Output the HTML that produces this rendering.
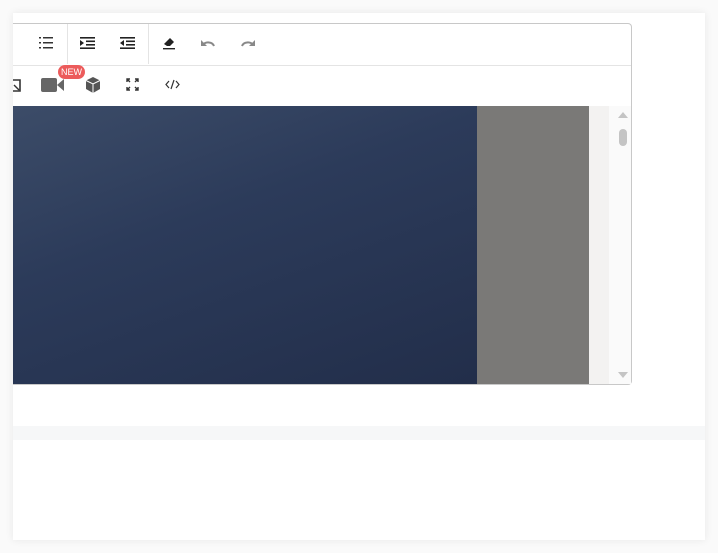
<!DOCTYPE html>
<html><head><style>
body{margin:0;width:718px;height:553px;background:#fafafa;position:relative;overflow:hidden;font-family:"Liberation Sans",sans-serif}
.card{position:absolute;left:13px;top:13px;width:692px;height:527px;background:#fff;box-shadow:0 0 8px rgba(0,0,0,.08)}
.ed{position:absolute;left:13px;top:23px;width:619px;height:362px;border:1px solid #c8c8c8;border-left:none;border-radius:0 4px 4px 0;background:#fff;box-sizing:border-box}
.row{position:absolute;left:0;width:618px;height:41px;border-bottom:1px solid #e4e4e4}
.sep{position:absolute;top:0;width:1px;height:40px;background:#e4e4e4}
svg{position:absolute}
.img{position:absolute;left:0;top:82px;width:464px;height:278px;background:linear-gradient(160deg,#3c4c68 0%,#2c3b5a 40%,#222e4a 100%)}
.gray{position:absolute;left:464px;top:82px;width:112px;height:278px;background:#7a7977}
.lt{position:absolute;left:576px;top:82px;width:20px;height:278px;background:#f3f2f1}
.sb{position:absolute;left:596px;top:82px;width:22px;height:278px;background:#fafafa}
.new{position:absolute;left:58px;top:65px;width:27px;height:14px;border-radius:7px;background:#ec5b5b;color:#fff;font-size:9px;line-height:14px;text-align:center}
</style></head><body>
<div class="card"></div>
<div style="position:absolute;left:13px;top:426px;width:692px;height:14px;background:#f6f7f8"></div>
<div class="ed">
<div class="row" style="top:0"><div class="sep" style="left:54px"></div><div class="sep" style="left:135px"></div></div>
<div class="row" style="top:41px"></div>
<div class="img"></div><div class="gray"></div><div class="lt"></div><div class="sb"></div>
</div>
<svg style="left:38px;top:36px" width="16" height="14"><g fill="#333"><rect x="5" y="1" width="10" height="1.5"/><rect x="5" y="6" width="10" height="1.5"/><rect x="5" y="11" width="10" height="1.5"/><rect x="1" y="1" width="2" height="1.5"/><rect x="1" y="6" width="2" height="1.5"/><rect x="1" y="11" width="2" height="1.5"/></g></svg>
<svg style="left:80px;top:37px" width="15" height="12"><g fill="#222"><rect x="0" y="0" width="15" height="1.6"/><rect x="6" y="3.5" width="9" height="1.6"/><rect x="6" y="7" width="9" height="1.6"/><rect x="0" y="10.4" width="15" height="1.6"/><path d="M0 3l4 3-4 3z"/></g></svg>
<svg style="left:120px;top:37px" width="15" height="12"><g fill="#222"><rect x="0" y="0" width="15" height="1.6"/><rect x="6" y="3.5" width="9" height="1.6"/><rect x="6" y="7" width="9" height="1.6"/><rect x="0" y="10.4" width="15" height="1.6"/><path d="M4 3L0 6l4 3z"/></g></svg>
<svg style="left:162px;top:36px" width="14" height="14"><path d="M2 8l6-6 4 4-4 4H5z" fill="#222"/><rect x="1" y="12" width="12" height="1.4" fill="#222"/></svg>
<svg style="left:200px;top:38px" width="16" height="10"><path d="M3 7a6 5 0 0 1 11 1" stroke="#888" stroke-width="2" fill="none"/><path d="M1 2v6h6z" fill="#888"/></svg>
<svg style="left:240px;top:38px" width="16" height="10"><path d="M13 7a6 5 0 0 0-11 1" stroke="#888" stroke-width="2" fill="none"/><path d="M15 2v6H9z" fill="#888"/></svg>
<svg style="left:13px;top:79px" width="8" height="13"><path d="M0 1h7v11H0" stroke="#333" stroke-width="1.6" fill="none"/><path d="M1 6l5 5" stroke="#333" stroke-width="1.4"/></svg>
<svg style="left:41px;top:77px" width="24" height="16"><rect x="0" y="1" width="16" height="14" rx="2" fill="#666"/><path d="M16 8l7-6v12z" fill="#666"/></svg>
<div class="new">NEW</div>
<svg style="left:85px;top:77px" width="16" height="16"><path d="M8 0l7 3.5v8.5L8 16 1 12V3.5z" fill="#555"/><path d="M1 3.5L8 7l7-3.5M8 7v9" stroke="#fff" stroke-width="1" fill="none"/></svg>
<svg style="left:126px;top:78px" width="13" height="13" stroke="#333" stroke-width="1.4" fill="none"><path d="M1 4V1h3M9 1h3v3M12 9v3H9M4 12H1V9M1 1l3 3M12 1L9 4M12 12L9 9M1 12l3-3"/></svg>
<svg style="left:165px;top:79px" width="15" height="11" stroke="#333" stroke-width="1.2" fill="none"><path d="M4 2L1 5.5 4 9M11 2l3 3.5L11 9M9 1L6 10"/></svg>
<svg style="left:617px;top:109px" width="12" height="272"><path d="M1 9l5-6 5 6z" fill="#c4c4c4"/><rect x="2" y="20" width="8" height="17" rx="4" fill="#c4c4c4"/><path d="M1 263l5 6 5-6z" fill="#c4c4c4"/></svg>
</body></html>
